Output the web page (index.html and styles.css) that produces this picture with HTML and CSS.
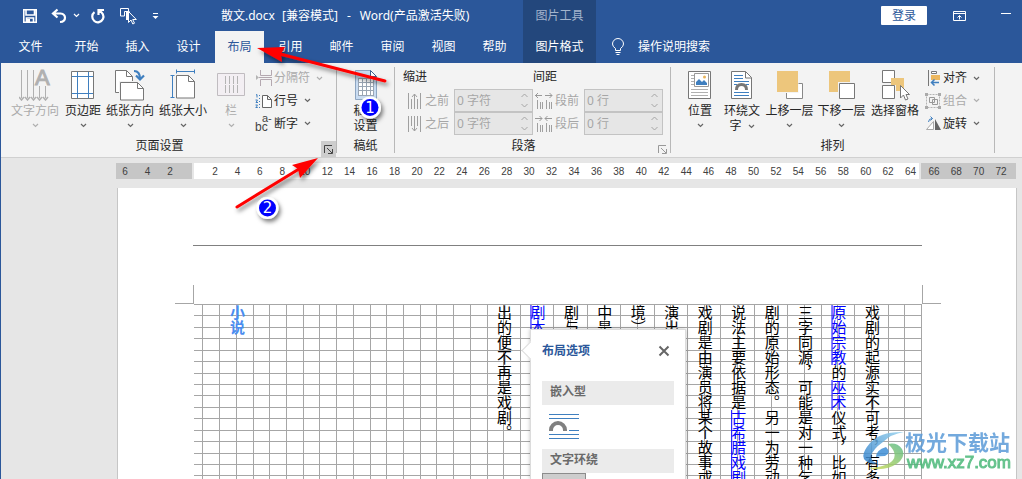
FILE: index.html
```html
<!DOCTYPE html>
<html lang="zh-CN">
<head>
<meta charset="utf-8">
<title>散文.docx - Word</title>
<link rel="stylesheet" href="styles.css">
</head>
<body>
<svg class="defs" aria-hidden="true">
  <symbol id="chev" viewBox="0 0 7 5"><path d="M1 1l2.500 2.500L6 1" fill="none" stroke="currentColor" stroke-width="1.200"/></symbol>
  <symbol id="chev-up" viewBox="0 0 9 5"><path d="M1.500 4L4.500 1l3 3" fill="none" stroke="currentColor"/></symbol>
  <symbol id="chev-down" viewBox="0 0 9 5"><path d="M1.500 1l3 3 3-3" fill="none" stroke="currentColor"/></symbol>
  <symbol id="launch" viewBox="0 0 9 9"><path d="M.5 8V.5H8M3 3l5 5M8.500 4v4.500H4" fill="none" stroke="currentColor"/></symbol>
</svg>
<div class="window">
  <header class="top">
    <div class="title-row">
      <div class="quick">
        <button class="ic" aria-label="保存"><svg width="16" height="16"><path d="M1.800 1.800h12.400v12.400H1.800zM4 2v5h8.500V2M4.500 14v-4h7v4" fill="none" stroke="#fff" stroke-width="1.600"/><path d="M5 11h3v3H5z" fill="#fff"/></svg></button>
        <button class="ic undo" aria-label="撤消"><svg width="16" height="16"><path d="M6.500 1.500L2 5.500l4.500 4M2.500 5.500h7q4.500.5 4.500 4.200 0 4-5 4.300" fill="none" stroke="#fff" stroke-width="2.200"/></svg></button>
        <svg class="quick-chev" width="7" height="5"><use href="#chev"/></svg>
        <button class="ic redo" aria-label="重复"><svg width="16" height="16"><path d="M9 3.200A5.600 5.600 0 1 1 4.500 4.200M8.500 7V2h5.500" fill="none" stroke="#fff" stroke-width="2.200"/></svg></button>
        <button class="ic touch" aria-label="选择对象"><svg width="18" height="18"><path d="M9.500 4V1.500h-8v7.500h4M5.500 9V4.500h5" fill="none" stroke="#fff"/><path d="M7 5h4v3l-2 5H7z" fill="#fff"/><path d="M9.500 4.500v11l2.500-2.500 1.800 4 1.700-.8-1.800-3.700h3.600z" fill="#2b579a" stroke="#fff"/></svg></button>
        <button class="ic more" aria-label="自定义快速访问工具栏"><svg width="7" height="8"><path d="M1 1.500h5" stroke="#fff"/><path d="M.5 4h6l-3 3z" fill="#fff"/></svg></button>
      </div>
      <div class="doc-title"><span>散文.docx</span><span>[兼容模式]</span><span class="dash">-</span><span>Word(产品激活失败)</span></div>
    </div>
    <nav class="tabs">
      <button class="tab file">文件</button><button class="tab">开始</button><button class="tab">插入</button><button class="tab">设计</button><button class="tab active">布局</button><button class="tab">引用</button><button class="tab">邮件</button><button class="tab">审阅</button><button class="tab">视图</button><button class="tab">帮助</button>
    </nav>
    <div class="context"><span class="context-title">图片工具</span><button class="tab context-tab">图片格式</button></div>
    <div class="account">
      <button class="login">登录</button>
      <button class="ic" aria-label="功能区显示选项"><svg width="14" height="12"><path d="M.5 1.500h12v9H.5zM.5 3.500h12M6.500 9.500V5.500M4.500 7.500l2-2 2 2" fill="none" stroke="#fff"/></svg></button>
      <button class="ic min" aria-label="最小化"><svg width="12" height="12"><path d="M1 3.500h10" stroke="#fff"/></svg></button>
    </div>
    <button class="tell"><svg width="14" height="18"><path d="M4.500 12.500v-2Q1.500 8.500 1.500 6a5.300 5.300 0 0 1 11 0q0 2.500-3 4.500v2zM4.500 14.500h5M5.500 16.500h3" fill="none" stroke="#fff"/></svg>操作说明搜索</button>
  </header>

  <section class="ribbon" aria-label="布局">
    <div class="group setup">
      <div class="tools">
        <button class="big" disabled><svg width="32" height="32"><path d="M2.500 1v28M8.500 1v28M14.500 1v28M20.500 17v12M26.500 17v12" stroke="#b0b0b0"/><path d="M0 28l2.500 3L5 28M6 28l2.500 3 2.500-3M12 28l2.500 3 2.500-3M18 28l2.500 3 2.500-3M24 28l2.500 3 2.500-3" fill="none" stroke="#b0b0b0" stroke-width="1.500"/><text x="16" y="16" font-size="22" fill="#b0b0b0" stroke="#b0b0b0">A</text></svg><span>文字方向</span><svg class="chev"><use href="#chev"/></svg></button>
        <button class="big"><svg width="32" height="32"><path d="M4.500 2.500h22v27h-22z" fill="#fff" stroke="#777"/><path d="M10.500 3v26M21.500 3v26M5 7.500h21M5 24.500h21" stroke="#3f7fbf"/></svg><span>页边距</span><svg class="chev"><use href="#chev"/></svg></button>
        <button class="big"><svg width="32" height="32"><path d="M1.500 1.500h11l6 6v16h-17z" fill="#fff" stroke="#777"/><path d="M12.500 1.500v6h6" fill="none" stroke="#777"/><path d="M5 12h19l7 7v13H5z" fill="#f3f3f3"/><path d="M6.500 13.500h17l6 6v11.500h-23z" fill="#fff" stroke="#777"/><path d="M23.500 13.500v6h6" fill="none" stroke="#777"/><path d="M20 2q6 0 6 8M22 6.500l4 4 4-4" fill="none" stroke="#3f7fbf" stroke-width="2.200"/></svg><span>纸张方向</span><svg class="chev"><use href="#chev"/></svg></button>
        <button class="big"><svg width="32" height="32"><path d="M9.500 6.500h12l6 6v16.500h-18z" fill="#fff" stroke="#777"/><path d="M21.500 6.500v6h6" fill="none" stroke="#777"/><path d="M9.500 .5v4M27.500 .5v4M9.500 2.500h18M3.500 6.500h4M3.500 28.500h4M5.500 6.500v22" stroke="#3f7fbf"/></svg><span>纸张大小</span><svg class="chev"><use href="#chev"/></svg></button>
        <button class="big" disabled><svg width="32" height="32"><path d="M2.500 4.500h27v22h-27z" fill="#f3eff3" stroke="#c0bcc0"/><path d="M10.500 7v8M14.500 7v8M18.500 7v8M22.500 7v8M10.500 16v8M14.500 16v8M18.500 16v8M22.500 16v8" stroke="#b4b4b4"/></svg><span>栏</span><svg class="chev"><use href="#chev"/></svg></button>
        <div class="stack">
          <button class="small" disabled><svg width="18" height="16"><path d="M5.500 0v5.500h11V0M5.500 16v-6.500h11V16M4 7.500h13" fill="none" stroke="#b4a8b0"/><path d="M1 5l3 2.500L1 10z" fill="#b4b4b4"/></svg>分隔符<svg class="chev"><use href="#chev"/></svg></button>
          <button class="small"><svg width="18" height="16"><path d="M7.500 2.500h5l4 4v8h-9zM12.500 2.500v4h4" fill="#fff" stroke="#666"/><path d="M1 2l1-.5v3M.5 7h2L1 9.500h2M.5 12h2l-1 1.200 1 1.300H.5M4.500 2v1M4.500 5v1M4.500 8v1M4.500 11v1M4.500 14v1" fill="none" stroke="#3f7fbf"/></svg>行号<svg class="chev"><use href="#chev"/></svg></button>
          <button class="small"><svg width="18" height="16"><text x="0" y="15" font-size="12" fill="#444">bc</text><text x="7" y="6" font-size="11" fill="#444">a-</text></svg>断字<svg class="chev"><use href="#chev"/></svg></button>
        </div>
      </div>
      <div class="caption">页面设置</div>
      <button class="launcher hot" aria-label="页面设置"><svg width="9" height="9"><use href="#launch"/></svg></button>
    </div>
    <div class="group paper">
      <div class="tools"><button class="big two"><svg width="32" height="32"><path d="M5.500 1.500h15l6 6v23h-21z" fill="#c9dcf2" stroke="#8ea6c2"/><path d="M20.500 1.500v6h6z" fill="#fff" stroke="#3d5f8c"/><path d="M8 9h16v18H8z" fill="#fff"/><path d="M8.500 9v18M12.500 9v18M16.500 9v18M20.500 9v18M23.500 9v18M8 9.500h16M8 13.500h16M8 17.500h16M8 21.500h16M8 26.500h16" stroke="#9aa6b4"/></svg><span>稿纸<br>设置</span></button></div>
      <div class="caption">稿纸</div>
    </div>
    <div class="group para">
      <div class="spacing">
        <b class="head">缩进</b><b class="head">间距</b>
        <label class="field" for="before"><svg width="14" height="18"><path d="M1.500 1v16M4.500 7v10M10.500 7v10M13.500 1v16M7.500 2v15M5 5l2.500-3L10 5" fill="none" stroke="#a0a0a0"/></svg><span>之前</span><span class="box"><input id="before" value="0 字符" disabled><span class="spin"><svg width="9" height="5"><use href="#chev-up"/></svg><svg width="9" height="5"><use href="#chev-down"/></svg></span></span></label>
        <label class="field wide" for="sp-before"><svg width="18" height="18"><path d="M0 3.500h7M3 1L.5 3.500 3 6M10 3.500h7M14.500 1L17 3.500 14.500 6" fill="none" stroke="#999"/><path d="M2.500 8v9M5.500 10v7M7.500 10v7M11.500 8v9M14.500 10v7M16.500 10v7" stroke="#a0a0a0"/></svg><span>段前</span><span class="box"><input id="sp-before" value="0 行" disabled><span class="spin"><svg width="9" height="5"><use href="#chev-up"/></svg><svg width="9" height="5"><use href="#chev-down"/></svg></span></span></label>
        <label class="field" for="after"><svg width="14" height="18"><path d="M1.500 1v16M4.500 1v10M10.500 1v10M13.500 1v16M7.500 1v15M5 13l2.500 3 2.500-3" fill="none" stroke="#a0a0a0"/></svg><span>之后</span><span class="box"><input id="after" value="0 字符" disabled><span class="spin"><svg width="9" height="5"><use href="#chev-up"/></svg><svg width="9" height="5"><use href="#chev-down"/></svg></span></span></label>
        <label class="field wide" for="sp-after"><svg width="18" height="18"><path d="M0 3.500h7M4.500 1L7 3.500 4.500 6M10 3.500h7M12.500 1L10 3.500l2.500 2.500" fill="none" stroke="#999"/><path d="M2.500 8v9M5.500 10v7M7.500 10v7M11.500 8v9M14.500 10v7M16.500 10v7" stroke="#a0a0a0"/></svg><span>段后</span><span class="box"><input id="sp-after" value="0 行" disabled><span class="spin"><svg width="9" height="5"><use href="#chev-up"/></svg><svg width="9" height="5"><use href="#chev-down"/></svg></span></span></label>
      </div>
      <div class="caption">段落</div>
      <button class="launcher dim" aria-label="段落设置"><svg width="9" height="9"><use href="#launch"/></svg></button>
    </div>
    <div class="group arrange">
      <div class="tools">
        <button class="big"><svg width="32" height="32"><path d="M4.500 2.500h22v27h-22z" fill="#fff" stroke="#777"/><path d="M7 6.500h3M7 9.500h3M7 12.500h3M7 15.500h3M7 20.500h17M7 23.500h17M7 26.500h17" stroke="#b0b0b0"/><path d="M10.500 4.500h14v13h-14z" fill="#fff" stroke="#999"/><path d="M12 16v-3l3-3 3 3 2-2 3 3v2z" fill="#3f7fbf"/><circle cx="20.500" cy="8" r="1.500" fill="#e8b35a"/></svg><span>位置</span><svg class="chev"><use href="#chev"/></svg></button>
        <button class="big two"><svg width="32" height="32"><path d="M5.500 2.500h14l6 6v21h-20z" fill="#fff" stroke="#777"/><path d="M19.500 2.500v6.500h6" fill="none" stroke="#777"/><path d="M8 6.500h9M8 9.500h9M8 12.500h15M8 23.500h15M8 26.500h15M8 15.500h3M20 15.500h3" stroke="#3f7fbf"/><path d="M10.500 21q0-5.500 5-5.500t5 5.500" fill="none" stroke="#777" stroke-width="3"/></svg><span>环绕文<br>字 <svg class="chev in"><use href="#chev"/></svg></span></button>
        <button class="big"><svg width="32" height="32"><path d="M12.500 14.500h16v15h-16z" fill="#fff" stroke="#888"/><path d="M2 1.500h22.500v22.500H2z" fill="#f3f3f3"/><path d="M3 2h21v21H3z" fill="#edc67c"/></svg><span>上移一层</span><svg class="chev"><use href="#chev"/></svg></button>
        <button class="big"><svg width="32" height="32"><path d="M3 2h21v21H3z" fill="#edc67c"/><path d="M12 13h18v18H12z" fill="#f3f3f3"/><path d="M13.500 14.500h15v15h-15z" fill="#fff" stroke="#777"/></svg><span>下移一层</span><svg class="chev"><use href="#chev"/></svg></button>
        <button class="big"><svg width="32" height="32"><path d="M3.500 1.500h12v12h-12zM3.500 16.500h12v13h-12z" fill="#fff" stroke="#777"/><path d="M12 9h13v13h-8v-6h-5z" fill="#edc67c"/><path d="M21.500 16.500v12.500l3-3 2 5 2.500-1-2-4.500h3.500z" fill="#fff" stroke="#777"/></svg><span>选择窗格</span></button>
        <div class="stack">
          <button class="small"><svg width="17" height="16"><path d="M3.500 0v16" stroke="#777"/><path d="M6.500 1.500h5v2h-5z" fill="#fff" stroke="#777"/><path d="M6 5h9v5H6z" fill="#edb75e"/><path d="M7 12.500h7M9.500 9.500l-3 3 3 3" fill="none" stroke="#3f7fbf" stroke-width="1.500"/></svg>对齐<svg class="chev"><use href="#chev"/></svg></button>
          <button class="small" disabled><svg width="17" height="16"><path d="M1.500 1.500h13v13h-13z" fill="none" stroke="#b4b4b4" stroke-dasharray="2 1"/><path d="M4.500 4.500h5v5h-5zM7.500 6.500h5v5h-5z" fill="none" stroke="#999"/><path d="M0 0h3v3H0zM13 0h3v3h-3zM0 13h3v3H0zM13 13h3v3h-3z" fill="#aaa"/></svg>组合<svg class="chev"><use href="#chev"/></svg></button>
          <button class="small"><svg width="17" height="16"><path d="M1.500 13.500h7v-8z" fill="#fff" stroke="#aaa"/><path d="M10 3v11h6z" fill="#666"/><path d="M3.500 6q0-3.500 4-3.500M5.500 .5l2 2-2 2" fill="none" stroke="#3f7fbf"/></svg>旋转<svg class="chev"><use href="#chev"/></svg></button>
        </div>
      </div>
      <div class="caption">排列</div>
    </div>
  </section>

  <main class="stage">
    <div class="ruler">
      <div class="seg off left"><i>6</i><i>4</i><i>2</i></div>
      <div class="seg mid"><i>2</i><i>4</i><i>6</i><i>8</i><i>10</i><i>12</i><i>14</i><i>16</i><i>18</i><i>20</i><i>22</i><i>24</i><i>26</i><i>28</i><i>30</i><i>32</i><i>34</i><i>36</i><i>38</i><i>40</i><i>42</i><i>44</i><i>46</i><i>48</i><i>50</i><i>52</i><i>54</i><i>56</i><i>58</i><i>60</i><i>62</i><i>64</i></div>
      <div class="seg off right"><i>66</i><i>68</i><i>70</i><i>72</i></div>
    </div>
    <article class="page">
      <div class="page-head"></div>
      <div class="crops"><span class="crop tl"></span><span class="crop tr"></span></div>
      <div class="text-area">
        <svg class="grid-lines" aria-hidden="true"><path id="grid" fill="none" stroke="#a6a6a6"/></svg>
        <h1 class="doc-head">小说</h1>
        <div class="cols">
          <p>戏剧的起源实不可考，有多</p>
          <p><a href="#a">原始宗教</a>的<a href="#b">巫术</a>仪式，比如</p>
          <p>三字同源，可能是对一种乞</p>
          <p>剧的原始形态。另一为劳动</p>
          <p>说法主要依据是<a href="#c">古希腊戏剧</a></p>
          <p>戏剧是由演员将某个故事或</p>
          <p>演出</p>
          <p>境）</p>
          <p>中是</p>
          <p>剧与</p>
          <p><a href="#d">剧本</a></p>
          <p>出的便不再是戏剧。</p>
        </div>
        <aside class="popup">
          <div class="popup-head"><h2>布局选项</h2><button class="ic" aria-label="关闭"><svg width="12" height="12"><path d="M1.500 1.500l9 9M10.500 1.500l-9 9" stroke="#666" stroke-width="2"/></svg></button></div>
          <h3>嵌入型</h3>
          <button class="inline-opt" aria-label="嵌入型"><svg width="32" height="28"><path d="M1 2.500h30M1 6.500h30M21 18.500h10M1 22.500h30M1 26.500h30" stroke="#3f7fbf"/><path d="M3 19v-1a7 7 0 0 1 14 0v1" fill="none" stroke="#808080" stroke-width="4"/></svg></button>
          <h3>文字环绕</h3>
          <button class="wrap-opt" aria-label="四周型"></button>
        </aside>
      </div>
    </article>
  </main>
</div>

<svg class="marks" width="400" height="230" aria-hidden="true">
  <defs><filter id="sh" x="-20%" y="-20%" width="150%" height="160%"><feDropShadow dx="2" dy="3" stdDeviation="2" flood-color="#000" flood-opacity=".5"/></filter></defs>
  <g filter="url(#sh)">
    <path d="M385 81L280 54" stroke="#f00" stroke-width="3" stroke-linecap="round"/><path d="M257 48l28-1-4 7 1 8z" fill="#f00"/>
    <path d="M237 207l62-38" stroke="#f00" stroke-width="3" stroke-linecap="round"/><path d="M318 158l-26 7 6 4 2 9z" fill="#f00"/>
    <circle cx="370" cy="107.500" r="11" fill="#fff"/><circle cx="267.500" cy="208" r="11" fill="#fff"/>
  </g>
  <circle cx="370" cy="107.500" r="8.500" fill="#00f"/><circle cx="267.500" cy="208" r="8.500" fill="#00f"/>
  <text class="num" x="370" y="112.500">1</text><text class="num" x="267.500" y="213">2</text>
</svg>

<div class="watermark">
  <svg width="42" height="40" viewBox="0 0 42 40"><defs><linearGradient id="lg1" x1="1" y1="0" x2="0" y2="1"><stop offset="0" stop-color="#9ad4ee"/><stop offset="1" stop-color="#2f7fcb"/></linearGradient><linearGradient id="lg2" x1="1" y1="0" x2="0" y2="1"><stop offset="0" stop-color="#5cbc8c"/><stop offset="1" stop-color="#d3dc52"/></linearGradient></defs><path d="M41 1Q18 0 7 12Q-4 25 3 30Q8 34 15 32Q7 31 8 25Q10 18 20 11Q28 3 41 1z" fill="url(#lg1)"/><path d="M23 16Q13 19 13 26Q17 25 22 25Q29 22 23 16z" fill="#3f8fd6"/><path d="M25 13Q34 11 39 18Q43 25 35 32Q22 41 5 37Q24 36 30 29Q35 22 25 13z" fill="url(#lg2)"/></svg>
  <div><div class="wm-name">极光下载站</div><div class="wm-url">www.xz7.com</div></div>
</div>
<script src="grid.js"></script>
</body>
</html>
```
FILE: styles.css
```css
* { box-sizing: border-box; }
html { overflow: hidden; }
body {
  margin: 0;
  height: 100vh;
  overflow: hidden;
  position: relative;
  font: 12px/14px "Noto Sans", "Noto Sans CJK SC", sans-serif;
  color: #262626;
  background: #e6e6e6;
}
button { font: inherit; color: inherit; background: none; border: 0; padding: 0; margin: 0; }
svg { flex: none; display: block; }
svg text { font-family: "Liberation Sans", sans-serif; }
.defs { display: none; }
.window { height: 100%; display: flex; flex-direction: column; border-left: 1px solid #2b579a; }

/* title bar and tabs */
.top {
  display: grid;
  grid-template-columns: 522px 73px 1fr;
  grid-template-rows: 31px 32px;
  background: #2b579a;
  color: #fff;
}
.title-row { display: flex; align-items: center; }
.quick { display: flex; align-items: center; width: 220px; padding-left: 21px; }
.ic { display: flex; align-items: center; justify-content: center; }
.undo { margin-left: 13px; }
.quick-chev { margin-left: 6px; }
.redo { margin-left: 10px; }
.touch { margin-left: 13px; }
.more { margin-left: 15px; }
.doc-title { display: flex; gap: 7px; white-space: nowrap; }
.dash { padding: 0 2px; }
.tabs { grid-row: 2; grid-column: 1; display: flex; gap: 2px; }
.tab { width: 49px; color: #fff; white-space: nowrap; }
.tab.file { width: 59px; }
.tab.active { background: #f3f3f3; color: #2b579a; }
.context { grid-row: 1 / 3; grid-column: 2; background: #23477c; display: grid; grid-template-rows: 31px 32px; place-items: center; }
.context-title { color: #a3b4cd; }
.account { grid-column: 3; grid-row: 1; display: flex; justify-content: flex-end; align-items: center; padding-right: 10px; }
.login { background: #fff; color: #2b579a; width: 46px; height: 19px; border-radius: 1px; margin-right: 26px; }
.min { margin-left: 33px; }
.tell { grid-column: 3; grid-row: 2; justify-self: start; display: flex; align-items: center; gap: 13px; padding-left: 15px; }

/* ribbon */
.ribbon { display: flex; height: 95px; background: #f3f3f3; border-bottom: 1px solid #d0d0d0; padding-top: 4px; }
.group { position: relative; display: flex; flex-direction: column; height: 86px; border-right: 1px solid #b8b8b8; }
.tools { display: flex; height: 71px; }
.caption { text-align: center; padding-top: 1px; }
.setup { width: 336px; }
.setup .caption { padding-right: 18px; }
.paper { width: 58px; }
.para { width: 276px; }
.para .caption { padding-right: 18px; }
.arrange { width: 324px; }
.big { display: flex; flex-direction: column; align-items: center; padding-top: 2px; white-space: nowrap; }
.big > span { margin-top: 2px; line-height: 15px; }
.big:disabled, .small:disabled { color: #ababab; }
.chev { width: 7px; height: 5px; color: #666; }
:disabled > .chev { color: #b0b0b0; }
.big > .chev { margin-top: 5px; }
.chev.in { display: inline-block; vertical-align: middle; margin-left: 3px; }
.setup .tools, .arrange .tools { display: grid; }
.setup .tools { padding-left: 7px; grid-template-columns: 54px 42px 52px 54px 42px 1fr; }
.arrange .tools { padding-left: 9px; grid-template-columns: 40px 44px 51px 53px 54px 1fr; }
.setup .stack { padding-left: 3px; }
.arrange .stack { padding-left: 3px; }
.paper .tools { justify-content: center; }
.stack { display: grid; grid-template-rows: 22px 23px 23px; }
.small { display: flex; align-items: center; gap: 1px; white-space: nowrap; }
.small .chev { margin-left: 5px; }
.launcher { position: absolute; right: 0; bottom: -4px; width: 15px; height: 16px; display: flex; align-items: center; justify-content: center; color: #444; }
.launcher.hot { background: #cdcdcd; }
.launcher.dim { color: #999; }
.spacing { display: grid; grid-template-columns: 130px 130px; grid-template-rows: 22px 23px 23px; height: 71px; padding-left: 8px; }
.head { font-weight: 400; line-height: 20px; }
.field { display: flex; align-items: center; gap: 4px; padding-left: 4px; color: #a6a6a6; white-space: nowrap; }
.field.wide { gap: 2px; padding-left: 2px; }
.box { display: flex; width: 79px; height: 23px; margin-left: auto; background: #e6e6e6; border: 1px solid #c3c3c3; }
.box input { min-width: 0; flex: 1; border: 0; background: none; padding: 0 2px; font: inherit; color: #a6a6a6; }
.spin { width: 16px; display: flex; flex-direction: column; align-items: center; justify-content: space-between; padding: 3px 0; }

/* document */
.stage { flex: 1; min-height: 0; display: flex; flex-direction: column; padding: 5px 5px 0 115px; }
.ruler { display: flex; gap: 2px; height: 16px; font: 10px/17px "Liberation Sans", sans-serif; color: #404040; padding-right: 1px; }
.seg { display: flex; justify-content: space-between; background: #fff; }
.seg i { width: 16px; font-style: normal; text-align: center; }
.seg.off { background: #c6c6c6; }
.seg.left { width: 76px; padding: 0 14px 0 1px; }
.seg.mid { flex: 1; padding-left: 13px; }
.seg.right { width: 95px; padding: 0 7px 0 5px; }
.page { flex: 1; min-height: 0; overflow: hidden; display: flex; flex-direction: column; margin: 9px 0 0 1px; background: #fff; border: 1px solid #c6c6c6; border-width: 0 1px; }
.page-head { height: 58px; margin: 0 94px 0 75px; border-bottom: 1px solid #808080; flex: none; }
.crops { display: flex; justify-content: space-between; padding: 39px 75px 0 57px; }
.crop { width: 19px; height: 19px; border-bottom: 1px solid #a6a6a6; }
.tl { border-right: 1px solid #a6a6a6; }
.tr { border-left: 1px solid #a6a6a6; }
.text-area { position: relative; flex: 1; min-height: 0; display: flex; justify-content: space-between; margin: 0 94px 0 76px; padding: 1px 42px 0 36px; }
.grid-lines { position: absolute; inset: 0; width: 100%; height: 100%; }
.doc-head, .cols { position: relative; font: 15px/15px "Noto Sans CJK SC", sans-serif; }
.doc-head { writing-mode: vertical-rl; margin: 0; font-weight: 700; color: #4a8df0; width: 15px; }
.cols { width: 383px; display: flex; flex-direction: row-reverse; justify-content: space-between; color: #000; }
.cols p { margin: 0; width: 15px; writing-mode: vertical-rl; white-space: nowrap; }
.cols a { color: #00f; text-decoration: underline 1px; text-underline-position: left; text-underline-offset: -2px; }

.popup { position: absolute; left: 336px; top: 25px; bottom: 0; width: 156px; padding: 0 11px; background: #fff; border: 1px solid #dcdcdc; border-bottom: 0; box-shadow: 0 0 4px rgba(0, 0, 0, .25); color: #6a6a6a; }
.popup::before { content: ""; position: absolute; left: -7px; top: 14px; width: 12px; height: 12px; background: #fff; border: 1px solid #dcdcdc; border-width: 0 0 1px 1px; transform: rotate(45deg); }
.popup-head { display: flex; justify-content: space-between; align-items: center; height: 42px; padding-right: 4px; margin-bottom: 9px; }
.popup h2 { margin: 0; font-size: 12px; color: #2b579a; }
.popup h3 { margin: 0; font-size: 12px; line-height: 22px; height: 24px; padding-left: 8px; background: #ebebeb; }
.inline-opt { display: block; padding: 7px 0 9px 6px; }
.wrap-opt { display: block; width: 44px; height: 40px; background: #cdcdcd; border: 1px solid #8c8c8c; }

/* overlays */
.marks { position: absolute; left: 0; top: 0; }
.marks .num { font: 15px "DejaVu Sans", sans-serif; fill: #fff; text-anchor: middle; }
.watermark { position: absolute; right: 11px; bottom: 6px; display: flex; align-items: center; opacity: .85; }
.wm-name { font: 700 21px/24px "Noto Sans CJK SC", sans-serif; color: #5b9bd8; }
.wm-url { font: 17px/20px "Liberation Sans", sans-serif; color: #4ab878; -webkit-text-stroke: 1px #4ab878; padding-left: 2px; }
```
FILE: grid.js
```js
// Manuscript grid: rules are counted from the right and top edges and snapped to whole pixels.
function drawGrid() {
  const svg = document.querySelector('.grid-lines');
  const w = svg.clientWidth, h = svg.clientHeight;
  let d = '';
  for (let k = 0; w - k * 16.71 > 1; k++) d += `M${Math.round(w - 1 - k * 16.71) + 0.5} 0V${h}`;
  for (let k = 0; k * 11.43 < h; k++) d += `M0 ${Math.round(k * 11.43) + 0.5}H${w}`;
  document.getElementById('grid').setAttribute('d', d);
}
drawGrid();
window.addEventListener('resize', drawGrid);
```
